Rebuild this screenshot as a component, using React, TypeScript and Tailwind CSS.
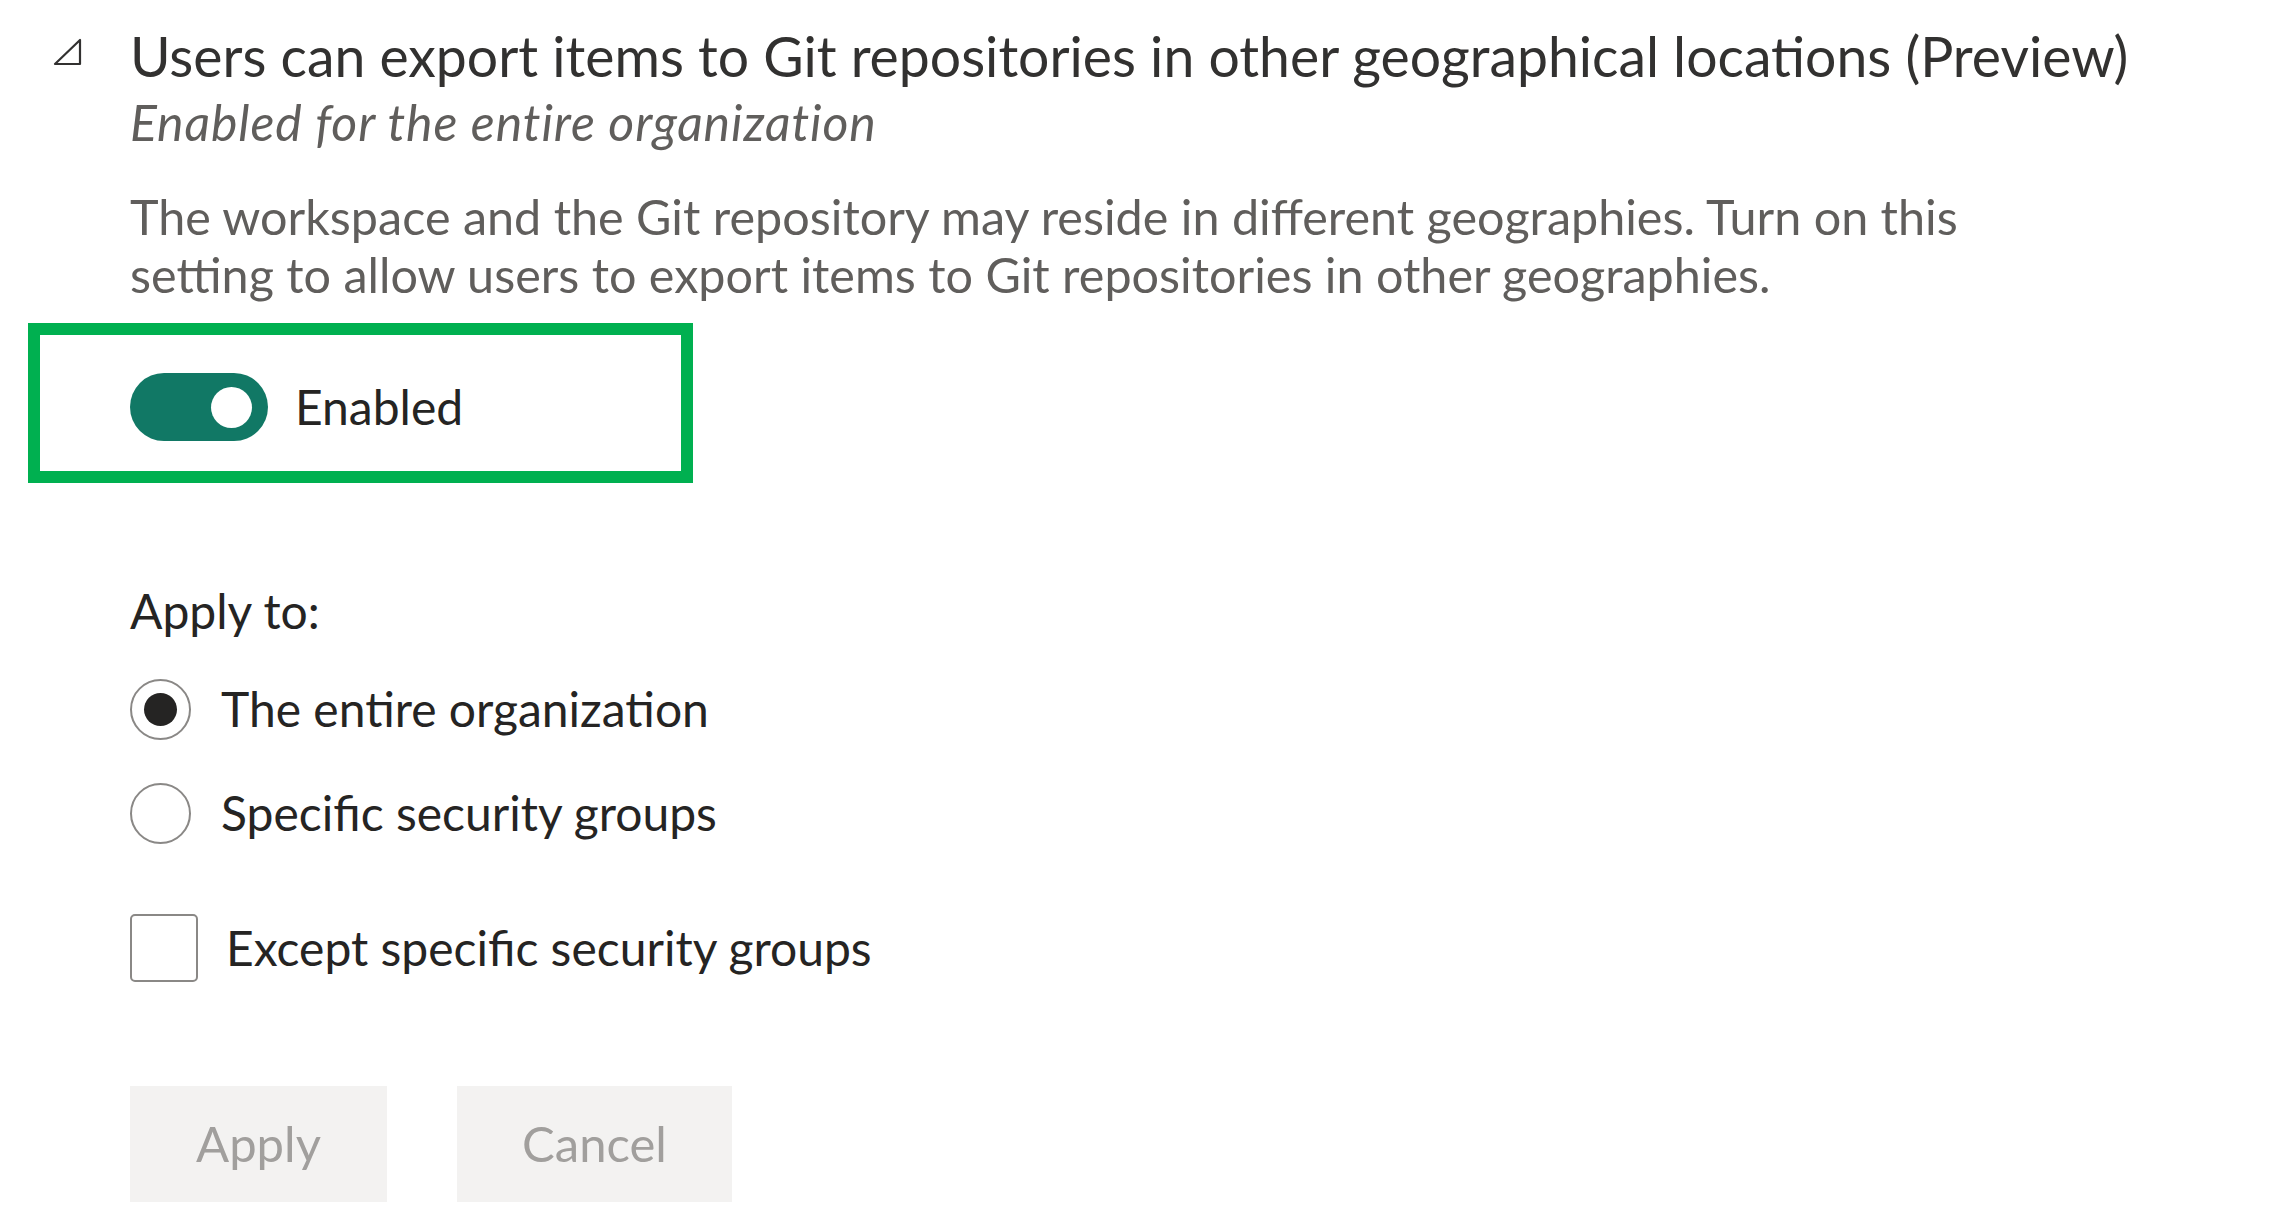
import React from 'react';

const font = { fontFamily: '"Segoe UI", Lato, "Noto Sans", sans-serif' };

function CollapseGlyph() {
  return (
    <svg width="30" height="28" viewBox="0 0 30 28" className="block">
      <path d="M27 2 L27 26 L2 26 Z" fill="none" stroke="#323130" strokeWidth="2.2" strokeLinejoin="round" />
    </svg>
  );
}

function Radio({ checked, label }: { checked?: boolean; label: string }) {
  return (
    <label className="flex items-center gap-[30px] h-[62px]">
      <span className="w-[61px] h-[61px] rounded-full border-2 border-[#8a8886] bg-white flex items-center justify-center shrink-0">
        {checked && <span className="w-[33px] h-[33px] rounded-full bg-[#252423]" />}
      </span>
      <span className="text-[48px] leading-[62px] text-[#252423]">{label}</span>
    </label>
  );
}

export default function App() {
  return (
    <div className="w-[2279px] h-[1215px] bg-white overflow-hidden" style={font}>
      {/* Header */}
      <div className="flex pt-[20px]">
        <div className="w-[130px] shrink-0 pl-[53px] pt-[18px]">
          <CollapseGlyph />
        </div>
        <div>
          <div className="text-[55.3px] leading-[72px] text-[#323130]">
            Users can export items to Git repositories in other geographical locations (Preview)
          </div>
          <div className="text-[50px] leading-[60px] italic tracking-[0.9px] text-[#605e5c]">
            Enabled for the entire organization
          </div>
        </div>
      </div>

      <p className="pl-[130px] mt-[35px] text-[48.5px] leading-[58px] text-[#605e5c]">
        The workspace and the Git repository may reside in different geographies. Turn on this
        <br />
        setting to allow users to export items to Git repositories in other geographies.
      </p>

      {/* Highlighted toggle */}
      <div className="ml-[28px] mt-[20px] w-[665px] h-[160px] border-[12px] border-[#00b050] flex items-center pl-[90px] pt-[8px]">
        <span className="w-[138px] h-[68px] rounded-full bg-[#117865] flex items-center justify-end pr-[16px]">
          <span className="w-[41px] h-[41px] rounded-full bg-white" />
        </span>
        <span className="ml-[27px] text-[48px] leading-[68px] text-[#252423]">Enabled</span>
      </div>

      <div className="pl-[130px]">
        <div className="mt-[99px] text-[48px] leading-[58px] text-[#252423]">Apply to:</div>

        <div className="mt-[38px] flex flex-col gap-[42px]">
          <Radio checked label="The entire organization" />
          <Radio label="Specific security groups" />
        </div>

        <label className="mt-[70px] flex items-center gap-[28px] h-[68px]">
          <span className="w-[68px] h-[68px] rounded-[5px] border-2 border-[#8a8886] bg-white shrink-0" />
          <span className="text-[48px] leading-[68px] text-[#252423]">Except specific security groups</span>
        </label>

        <div className="mt-[104px] flex gap-[70px]">
          <button className="w-[257px] h-[116px] bg-[#f3f2f1] text-[49px] text-[#a19f9d]" style={font} disabled>
            Apply
          </button>
          <button className="w-[275px] h-[116px] bg-[#f3f2f1] text-[49px] text-[#a19f9d]" style={font} disabled>
            Cancel
          </button>
        </div>
      </div>
    </div>
  );
}
